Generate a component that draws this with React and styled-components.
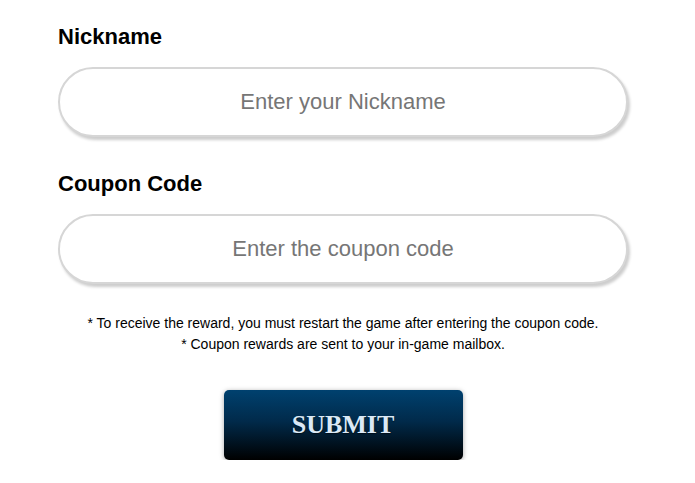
import React from "react";
import styled, { createGlobalStyle } from "styled-components";

const GlobalStyle = createGlobalStyle`
	body {
		margin: 0;
		background: #fff;
		font-family: "Liberation Sans", Arial, sans-serif;
	}
`;

const Form = styled.form`
	width: 570px;
	margin-left: 58px;
	padding-top: 24px;
	display: flex;
	flex-direction: column;
`;

const Field = styled.div`
	display: flex;
	flex-direction: column;
	gap: 18px;
	margin-bottom: ${p => p.$spacing}px;
`;

const Label = styled.label`
	font-size: 22px;
	line-height: 25px;
	font-weight: bold;
	color: #000;
`;

const Input = styled.input`
	box-sizing: border-box;
	width: 100%;
	height: 70px;
	border: 2px solid #d6d6d6;
	border-radius: 36px;
	box-shadow: 2px 3px 3px rgba(0, 0, 0, 0.2);
	background: #fff;
	font-family: "Liberation Sans", Arial, sans-serif;
	font-size: 22px;
	text-align: center;
	outline: none;
	&::placeholder {
		color: #767676;
	}
`;

const Notes = styled.p`
	margin: 0;
	font-size: 14px;
	line-height: 21px;
	color: #000;
	text-align: center;
`;

const Submit = styled.button`
	align-self: center;
	margin-top: 35px;
	width: 239px;
	height: 70px;
	border: none;
	border-radius: 5px;
	background: linear-gradient(to bottom, #00416f 0%, #012a4a 45%, #000 100%);
	box-shadow: 0 1px 5px rgba(0, 0, 0, 0.35);
	font-family: "Liberation Serif", "Times New Roman", serif;
	font-weight: bold;
	font-size: 26px;
	color: #dbe9f6;
	text-shadow: 0 1px 1px rgba(0, 0, 0, 0.5);
	cursor: pointer;
`;

export default function App() {
	return (
		<>
			<GlobalStyle />
			<Form onSubmit={e => e.preventDefault()}>
				<Field $spacing={34}>
					<Label>Nickname</Label>
					<Input placeholder="Enter your Nickname" />
				</Field>
				<Field $spacing={29}>
					<Label>Coupon Code</Label>
					<Input placeholder="Enter the coupon code" />
				</Field>
				<Notes>
					* To receive the reward, you must restart the game after entering the coupon code.
					<br />* Coupon rewards are sent to your in-game mailbox.
				</Notes>
				<Submit type="submit">SUBMIT</Submit>
			</Form>
		</>
	);
}
